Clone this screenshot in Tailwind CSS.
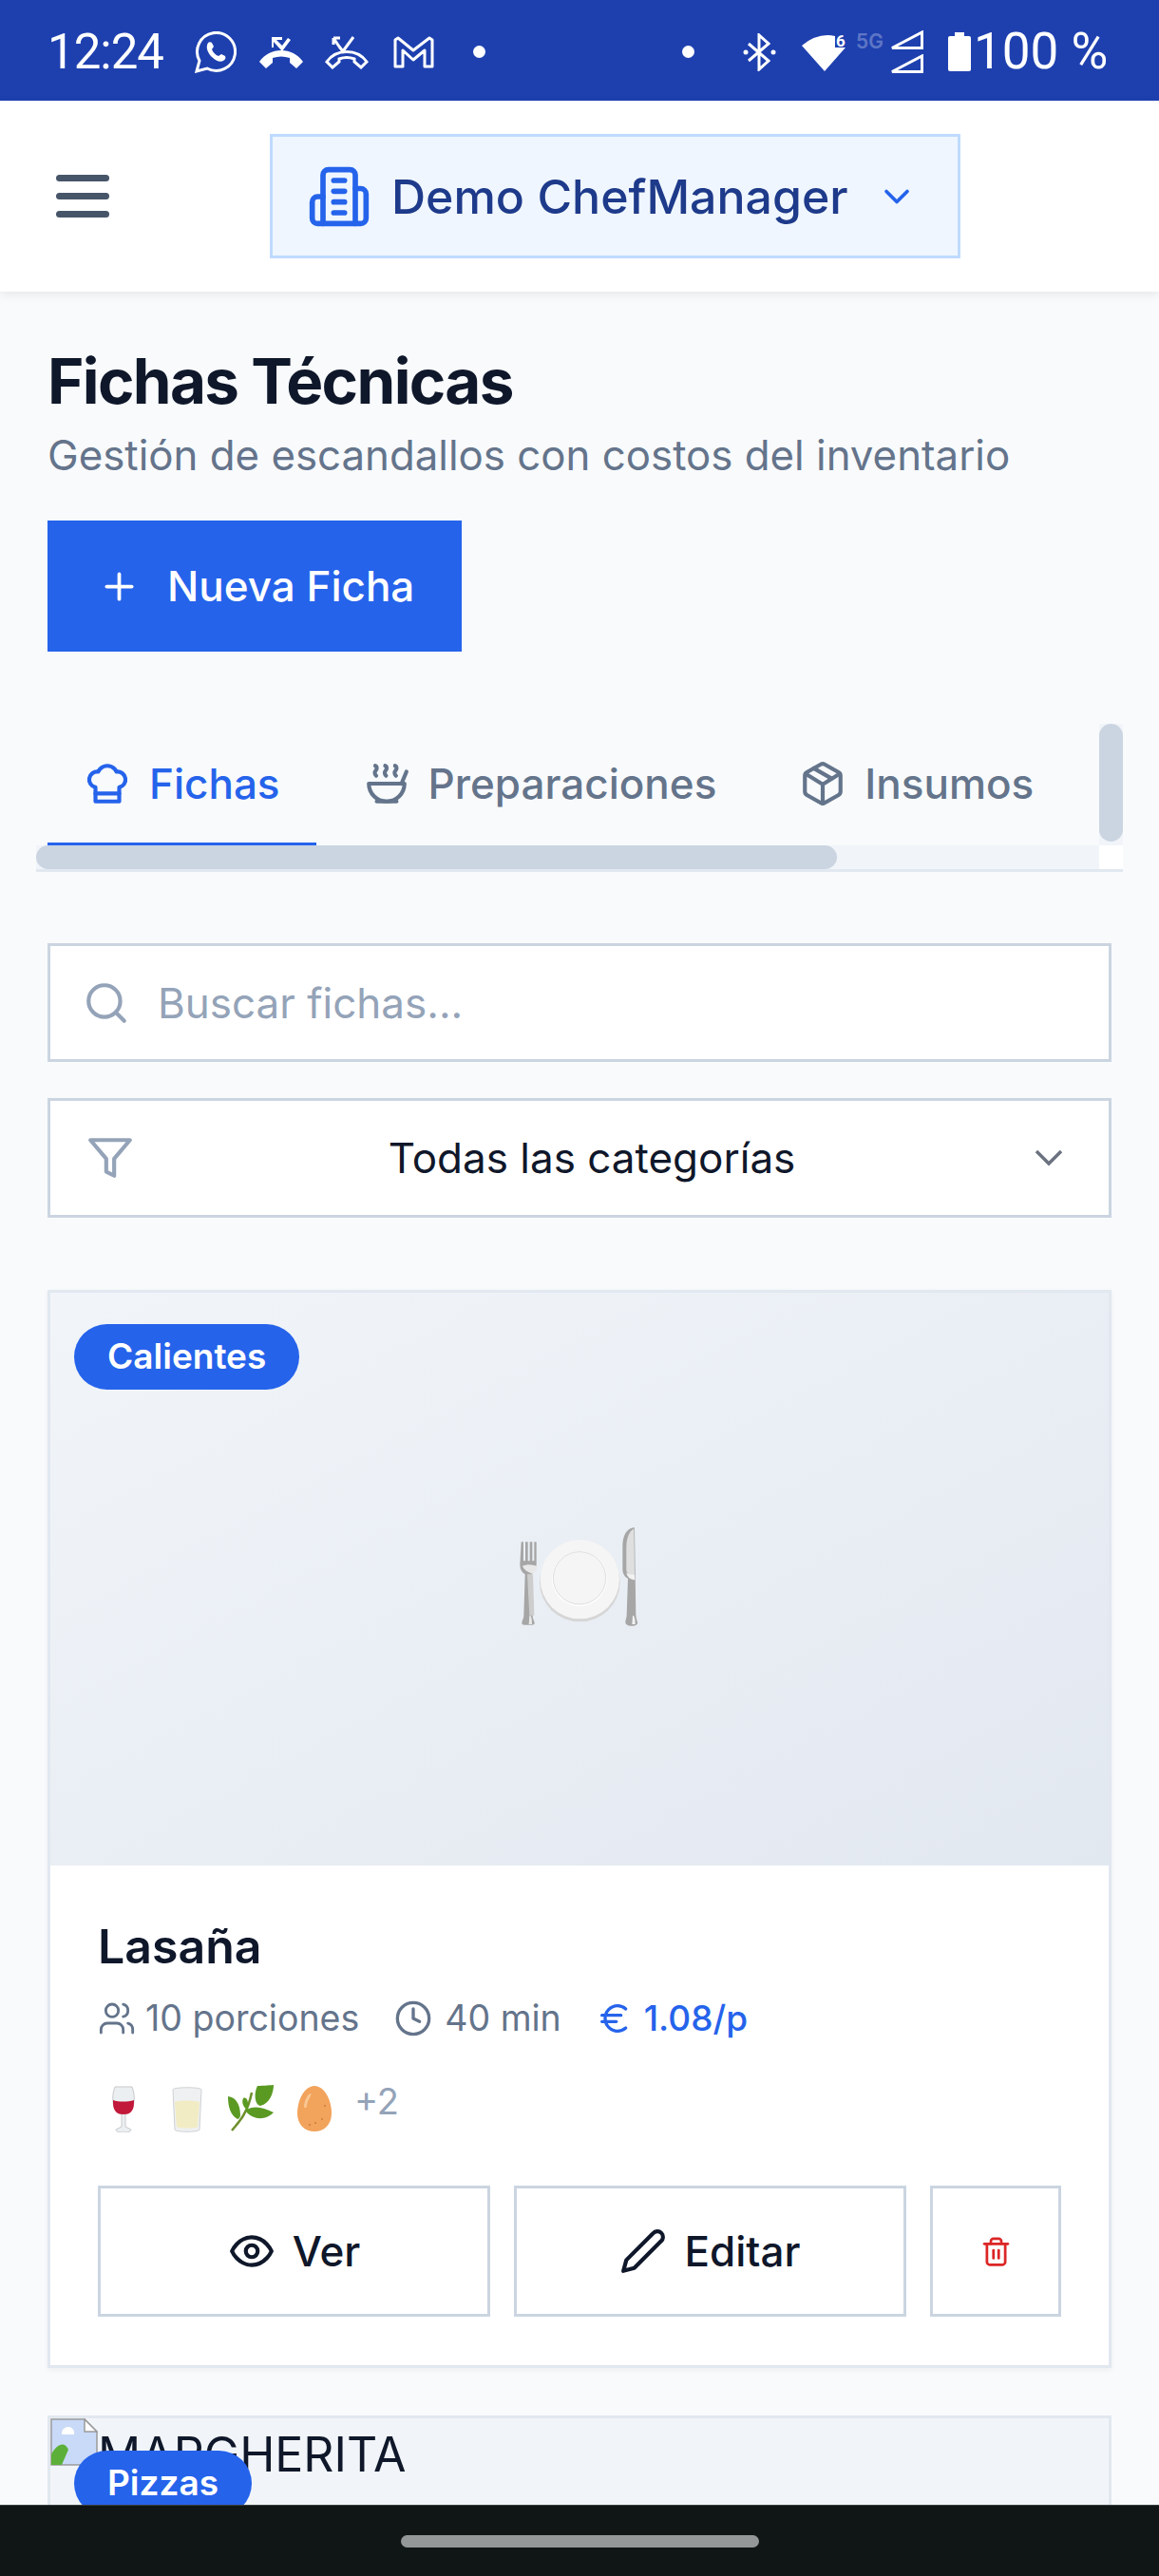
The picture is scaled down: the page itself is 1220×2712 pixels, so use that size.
<!DOCTYPE html>
<html lang="es">
  <head>
    <meta charset="UTF-8" />
    <title>Fichas Técnicas</title>
    <script src="https://cdn.jsdelivr.net/npm/@tailwindcss/browser@4"></script>
  </head>
  <body class="bg-[#f8fafc] font-['Inter',sans-serif] text-[#0f172a]">
    <div class="relative h-[2712px] w-[1220px] overflow-hidden">
      <!-- Android status bar -->
      <div class="flex h-[106px] items-center bg-[#1e40af] pl-[50px] pt-[3px] text-white">
        <span class="w-[125px] font-['Roboto',sans-serif] text-[51px] leading-none tracking-[-1px]">12:24</span>
        <svg class="ml-[30px] h-[44px] w-[44px]" viewBox="0 0 44 44" fill="none" stroke="white" stroke-width="3">
          <path d="M2 42l3-11A20 20 0 1 1 13 39z" />
          <path fill="white" stroke="none" d="M14 12c1-1 3-1 4 0l2 4-2 3c1 3 4 6 7 7l3-2 4 2c1 2 0 4-2 5-3 2-8 0-12-4s-7-10-4-15z" />
        </svg>
        <svg class="ml-[23px] h-[36px] w-[48px]" viewBox="0 0 48 36" fill="white">
          <path d="M1 28C12 12 36 12 47 28l-7 7-7-6v-5c-6-2-12-2-18 0v5l-7 6z" />
          <path d="M14 2h11v3h-6l6 6 6-8 3 2-9 12-9-10v6h-2z" />
        </svg>
        <svg class="ml-[22px] h-[36px] w-[46px]" viewBox="0 0 46 36" fill="none" stroke="white" stroke-width="3">
          <path d="M2 28C12 14 34 14 44 28l-6 6-7-6v-3c-5-2-11-2-16 0v3l-7 6z" />
          <path stroke-width="3" d="M15 12 9 3m0 0v7m0-7h7M15 12l4 5 11-15" />
        </svg>
        <svg class="ml-[26px] h-[34px] w-[43px]" viewBox="0 0 43 34" fill="none" stroke="white" stroke-width="3" stroke-linejoin="round">
          <path d="M2 4l3-2 16 13L38 2l3 2v28h-8V15L21 25 10 15v17H2z" />
        </svg>
        <span class="ml-[41px] h-[13px] w-[13px] rounded-full bg-white"></span>
        <span class="ml-[207px] h-[13px] w-[13px] rounded-full bg-white"></span>
        <svg class="ml-[51px] h-[40px] w-[35px]" viewBox="0 0 35 40" fill="none" stroke="white" stroke-width="3">
          <path d="M6 11l21 18-10 9V2l10 9L6 29" />
          <circle cx="3" cy="20" r="2.5" fill="white" stroke="none" />
          <circle cx="32" cy="20" r="2.5" fill="white" stroke="none" />
        </svg>
        <svg class="ml-[27px] h-[42px] w-[46px]" viewBox="0 0 46 42" fill="white">
          <path d="M0 14Q17 0 35 4V16H46L24 41Z" />
          <text x="36" y="15" font-family="Roboto, sans-serif" font-size="17" font-weight="700" fill="white">6</text>
        </svg>
        <span class="ml-[11px] w-[30px] self-start pt-[29px] text-[21px] font-semibold leading-[24px] text-white/30">5G</span>
        <div class="ml-[4px] flex flex-col gap-[5px]">
          <svg class="h-[20px] w-[37px]" viewBox="0 0 37 20" fill="none" stroke="white" stroke-width="3"><path d="M4 18.500 35.500 2v16.500z" /></svg>
          <svg class="h-[20px] w-[37px]" viewBox="0 0 37 20" fill="none" stroke="white" stroke-width="3"><path d="M4 18.500 35.500 2v16.500z" /></svg>
        </div>
        <svg class="ml-[26px] h-[41px] w-[24px]" viewBox="0 0 24 41" fill="white"><path d="M7 0h10v4h5a2 2 0 0 1 2 2v33a2 2 0 0 1-2 2H2a2 2 0 0 1-2-2V6a2 2 0 0 1 2-2h5z" /></svg>
        <span class="ml-[3px] font-['Roboto',sans-serif] text-[53px] leading-none">100 %</span>
      </div>

      <!-- App header -->
      <header class="relative flex h-[201px] items-center bg-white pl-[59px] shadow-[0_3px_10px_rgba(0,0,0,0.08)]">
        <button class="flex w-[56px] flex-col gap-[12px]">
          <span class="h-[7px] w-[56px] rounded-full bg-[#475569]"></span>
          <span class="h-[7px] w-[56px] rounded-full bg-[#475569]"></span>
          <span class="h-[7px] w-[56px] rounded-full bg-[#475569]"></span>
        </button>
        <div class="ml-[169px] flex h-[131px] w-[727px] items-center border-[3px] border-[#bfdbfe] bg-[#eff6ff] pl-[36px]">
          <svg class="h-[68px] w-[68px]" viewBox="0 0 24 24" fill="none" stroke="#2563eb" stroke-width="2" stroke-linecap="round" stroke-linejoin="round">
            <path d="M6 22V4a2 2 0 0 1 2-2h8a2 2 0 0 1 2 2v18Z" />
            <path d="M6 12H4a2 2 0 0 0-2 2v6a2 2 0 0 0 2 2h2" />
            <path d="M18 9h2a2 2 0 0 1 2 2v9a2 2 0 0 1-2 2h-2" />
            <path d="M10 6h4" /><path d="M10 10h4" /><path d="M10 14h4" /><path d="M10 18h4" />
          </svg>
          <span class="ml-[21px] text-[50px] font-medium leading-none text-[#1e3a8a]">Demo ChefManager</span>
          <svg class="ml-[29px] h-[44px] w-[44px]" viewBox="0 0 24 24" fill="none" stroke="#2563eb" stroke-width="2" stroke-linecap="round" stroke-linejoin="round"><path d="m6 9 6 6 6-6" /></svg>
        </div>
      </header>

      <main class="px-[50px]">
        <h1 class="mt-[50px] text-[65.5px] font-bold leading-[90px] tracking-[-0.025em] text-[#0f172a]">Fichas Técnicas</h1>
        <p class="mt-[3px] text-[43.8px] leading-[60px] text-[#64748b]">Gestión de escandallos con costos del inventario</p>
        <button class="mt-[38px] flex h-[138px] w-[436px] items-center bg-[#2563eb] pl-[53px] text-[44px] font-medium text-white">
          <svg class="h-[45px] w-[45px]" viewBox="0 0 24 24" fill="none" stroke="white" stroke-width="2" stroke-linecap="round"><path d="M5 12h14" /><path d="M12 5v14" /></svg>
          <span class="ml-[28px]">Nueva Ficha</span>
        </button>

        <!-- Tabs with their scrollbars -->
        <div class="-ml-[12px] mt-[76px] w-[1144px] border-b-[3px] border-[#e2e8f0]">
          <div class="grid grid-cols-[1119px_25px] grid-rows-[128px_25px]">
            <div class="flex gap-[11px] overflow-hidden pl-[12px]">
              <div class="flex h-[128px] items-center gap-[19px] border-b-[3px] border-[#2563eb] px-[38px] text-[44px] font-medium text-[#2563eb]">
                <svg class="h-[50px] w-[50px]" viewBox="0 0 24 24" fill="none" stroke="currentColor" stroke-width="2" stroke-linecap="round" stroke-linejoin="round">
                  <path d="M6 13.870A4 4 0 0 1 7.410 6a5.110 5.110 0 0 1 1.050-1.540 5 5 0 0 1 7.080 0A5.110 5.110 0 0 1 16.590 6 4 4 0 0 1 18 13.870V21H6Z" /><path d="M6 17h12" />
                </svg>
                <span>Fichas</span>
              </div>
              <div class="flex h-[128px] items-center gap-[19px] border-b-[3px] border-transparent px-[38px] text-[44px] font-medium text-[#64748b]">
                <svg class="h-[50px] w-[50px]" viewBox="0 0 24 24" fill="none" stroke="currentColor" stroke-width="2" stroke-linecap="round" stroke-linejoin="round">
                  <path d="M12 21a9 9 0 0 0 9-9H3a9 9 0 0 0 9 9Z" /><path d="M7 21h10" /><path d="M19.500 12 22 6" />
                  <path d="M16.250 3c.27.1.8.53.75 1.360-.06.83-.93 1.200-1 2.020-.05.78.34 1.240.73 1.620" />
                  <path d="M11.250 3c.27.1.8.53.74 1.360-.05.83-.93 1.200-.98 2.020-.06.78.33 1.240.72 1.620" />
                  <path d="M6.250 3c.27.1.8.53.75 1.360-.06.83-.93 1.200-1 2.020-.05.78.34 1.240.74 1.620" />
                </svg>
                <span>Preparaciones</span>
              </div>
              <div class="flex h-[128px] items-center gap-[19px] border-b-[3px] border-transparent px-[38px] text-[44px] font-medium text-[#64748b]">
                <svg class="h-[50px] w-[50px]" viewBox="0 0 24 24" fill="none" stroke="currentColor" stroke-width="2" stroke-linecap="round" stroke-linejoin="round">
                  <path d="M11 21.730a2 2 0 0 0 2 0l7-4A2 2 0 0 0 21 16V8a2 2 0 0 0-1-1.730l-7-4a2 2 0 0 0-2 0l-7 4A2 2 0 0 0 3 8v8a2 2 0 0 0 1 1.730z" />
                  <path d="M12 22V12" /><path d="m3.300 7 7.703 4.734a2 2 0 0 0 1.994 0L20.700 7" /><path d="m7.500 4.270 9 5.150" />
                </svg>
                <span>Insumos</span>
              </div>
            </div>
            <div class="bg-[#f1f5f9]"><div class="h-[124px] w-[25px] rounded-full bg-[#cbd5e1]"></div></div>
            <div class="bg-[#f1f5f9]"><div class="h-[25px] w-[843px] rounded-full bg-[#cbd5e1]"></div></div>
            <div class="bg-white"></div>
          </div>
        </div>

        <!-- Search and filter -->
        <div class="mt-[75px] flex h-[125px] items-center border-[3px] border-[#cbd5e1] bg-white pl-[34px]">
          <svg class="h-[50px] w-[50px] shrink-0" viewBox="0 0 24 24" fill="none" stroke="#94a3b8" stroke-width="2" stroke-linecap="round" stroke-linejoin="round"><circle cx="11" cy="11" r="8" /><path d="m21 21-4.300-4.300" /></svg>
          <span class="ml-[29px] text-[44px] text-[#94a3b8]">Buscar fichas...</span>
        </div>
        <div class="mt-[38px] flex h-[126px] items-center justify-between border-[3px] border-[#cbd5e1] bg-white pl-[38px] pr-[48px]">
          <svg class="h-[50px] w-[50px] shrink-0" viewBox="0 0 24 24" fill="none" stroke="#94a3b8" stroke-width="2" stroke-linecap="round" stroke-linejoin="round"><polygon points="22 3 2 3 10 12.460 10 19 14 21 14 12.460 22 3" /></svg>
          <span class="ml-[16px] text-[44px] text-[#0f172a]">Todas las categorías</span>
          <svg class="h-[18px] w-[30px] shrink-0" viewBox="0 0 30 18" fill="none" stroke="#6b7280" stroke-width="3.500"><path d="M2 2l13 13L28 2" /></svg>
        </div>

        <!-- First recipe card -->
        <article class="mt-[76px] border-[3px] border-[#e2e8f0] bg-white shadow-[0_2px_6px_rgba(0,0,0,0.05)]">
          <div class="relative flex h-[603px] items-center justify-center bg-gradient-to-br from-[#f1f5f9] to-[#e2e8f0]">
            <span class="absolute left-[25px] top-[33px] rounded-full bg-[#2563eb] px-[35px] pb-[10px] pt-[8px] text-[37px] font-semibold leading-[51px] text-white">Calientes</span>
            <svg class="mb-[6px] h-[170px] w-[220px]" viewBox="0 15 660 510">
              <ellipse cx="331" cy="287" rx="127" ry="125" fill="#d6d6d6" />
              <circle cx="331" cy="278" r="125" fill="#f5f5f5" />
              <circle cx="330" cy="276" r="87" fill="#fff" />
              <circle cx="330" cy="274" r="83" fill="#f5f5f5" stroke="#dedede" stroke-width="3" />
              <path fill="#a6a6a6" d="M146 160h7v60h6v-60h8v60h6v-60h8v60h6v-60h7v70c0 16-6 26-16 32l4 130c0 12 6 18 6 24 0 6-6 6-20 6s-20 0-20-6c0-8 6-14 6-24l4-130c-10-6-16-16-16-32l4-70z" />
              <path fill="#cdcdcd" d="M165 262h18l4 130h-15z" />
              <path fill="#e8e8e8" d="M150 236c12-6 30-6 46 0 0 10-4 18-14 24-14-4-26-10-32-24zM172 392c6 0 8 10 8 28h-10z" />
              <path fill="#a6a6a6" d="M500 115c-22 4-34 26-34 60v70c0 16 8 26 17 30l-4 116c0 10-4 16-4 22s6 12 20 12 20-6 18-12c-2-6-4-12-5-22l-4-276z" />
              <path fill="#dfdfdf" d="M502 118c-16 10-24 30-24 60v70c0 12 14 18 26 20z" />
              <path fill="#f2f2f2" d="M478 258c8 4 18 6 26 6l1 16c-12 0-24-8-27-22zM498 392c6 0 8 14 8 28h-10z" />
            </svg>
          </div>
          <div class="px-[50px] pb-[51px] pt-[50px]">
            <h3 class="text-[50px] font-semibold leading-[70px] text-[#0f172a]">Lasaña</h3>
            <div class="mt-[13px] flex h-[56px] items-center text-[37.5px] text-[#64748b]">
              <svg class="h-[40px] w-[40px]" viewBox="0 0 24 24" fill="none" stroke="currentColor" stroke-width="1.700" stroke-linecap="round" stroke-linejoin="round">
                <path d="M16 21v-2a4 4 0 0 0-4-4H6a4 4 0 0 0-4 4v2" /><circle cx="9" cy="7" r="4" /><path d="M22 21v-2a4 4 0 0 0-3-3.870" /><path d="M16 3.130a4 4 0 0 1 0 7.750" />
              </svg>
              <span class="ml-[10px]">10 porciones</span>
              <svg class="ml-[37px] h-[40px] w-[40px]" viewBox="0 0 24 24" fill="none" stroke="currentColor" stroke-width="2" stroke-linecap="round" stroke-linejoin="round"><circle cx="12" cy="12" r="10" /><path d="M12 6v6l4 2" /></svg>
              <span class="ml-[13px]">40 min</span>
              <svg class="ml-[36px] h-[40px] w-[40px]" viewBox="0 0 24 24" fill="none" stroke="#2563eb" stroke-width="2" stroke-linecap="round" stroke-linejoin="round">
                <path d="M4 10h12" /><path d="M4 14h9" /><path d="M19 6a7.700 7.700 0 0 0-5.200-2A7.900 7.900 0 0 0 6 12c0 4.400 3.500 8 7.800 8 2 0 3.800-.8 5.200-2" />
              </svg>
              <span class="ml-[11px] text-[37px] font-medium text-[#2563eb]">1.08/p</span>
            </div>
            <div class="mt-[42px] flex h-[50px] items-start gap-[17px] pl-[2px]">
              <svg class="h-[50px] w-[50px]" viewBox="0 0 50 50">
                <path fill="#eceff1" stroke="#c7c9cb" d="M16 2h18c3 8 3 17 0 23-2 4-5 5-7 6v13l6 3c0 2-3 3-8 3s-8-1-8-3l6-3V31c-2-1-5-2-7-6-3-6-3-15 0-23z" />
                <path fill="#c2183a" d="M14 16c6 2 15 2 22 0 0 5 0 8-2 11-2 3-5 4-9 4s-7-1-9-4c-2-3-2-6-2-11z" />
              </svg>
              <svg class="h-[50px] w-[50px]" viewBox="0 0 50 50">
                <path fill="#eef0f1" stroke="#cfd2d4" d="M10 5c0-3 30-3 30 0l-2 42c0 3-26 3-26 0z" />
                <path fill="#f2ecc4" d="M12 18c5-2 21-2 26 0l-2 26c-3 2-19 2-22 0z" />
              </svg>
              <svg class="h-[50px] w-[50px]" viewBox="0 0 50 50">
                <path fill="none" stroke="#6d8f2c" stroke-width="2.500" d="M5 48C14 38 22 28 26 8" />
                <path fill="#5a9a22" d="M32 1c6 0 16-1 17-1 0 8-4 20-14 22-6-1-7-13-3-21zM1 12c8 1 13 8 13 20 0 2-2 4-3 4C4 32 1 24 1 12zM19 27c9-6 18-4 30 2-7 7-20 10-30-2zM17 14c4-2 6 4 5 12-5-2-7-8-5-12z" />
              </svg>
              <svg class="h-[50px] w-[50px]" viewBox="0 0 50 50">
                <path fill="#f2a35c" d="M25 1c10 0 18 14 18 29 0 12-8 19-18 19S7 42 7 30C7 15 15 1 25 1z" />
                <path fill="#f9c792" d="M14 22c1-8 5-13 7-13 2 1-3 6-4 13 0 3-3 3-3 0z" />
                <circle cx="20" cy="42" r="1" fill="#c77e3e" /><circle cx="26" cy="40" r="1" fill="#c77e3e" /><circle cx="33" cy="36" r="1" fill="#c77e3e" /><circle cx="36" cy="22" r="1" fill="#c77e3e" />
              </svg>
              <span class="-mt-[8px] text-[38px] leading-[50px] text-[#94a3b8]">+2</span>
            </div>
            <div class="mt-[56px] flex gap-[25px]">
              <button class="flex h-[138px] flex-1 items-center justify-center gap-[18px] border-[3px] border-[#cbd5e1] bg-white text-[44px] font-medium text-[#0f172a]">
                <svg class="h-[50px] w-[50px]" viewBox="0 0 24 24" fill="none" stroke="currentColor" stroke-width="2" stroke-linecap="round" stroke-linejoin="round"><path d="M2 12s3-7 10-7 10 7 10 7-3 7-10 7-10-7-10-7Z" /><circle cx="12" cy="12" r="3" /></svg>
                Ver
              </button>
              <button class="flex h-[138px] flex-1 items-center justify-center gap-[18px] border-[3px] border-[#cbd5e1] bg-white text-[44px] font-medium text-[#0f172a]">
                <svg class="h-[50px] w-[50px]" viewBox="0 0 24 24" fill="none" stroke="currentColor" stroke-width="2" stroke-linecap="round" stroke-linejoin="round"><path d="M17 3a2.850 2.830 0 1 1 4 4L7.500 20.500 2 22l1.500-5.500Z" /></svg>
                Editar
              </button>
              <button class="flex h-[138px] w-[138px] items-center justify-center border-[3px] border-[#cbd5e1] bg-white">
                <svg class="h-[33px] w-[33px]" viewBox="0 0 24 24" fill="none" stroke="#dc2626" stroke-width="2" stroke-linecap="round" stroke-linejoin="round">
                  <path d="M3 6h18" /><path d="M19 6v14c0 1-1 2-2 2H7c-1 0-2-1-2-2V6" /><path d="M8 6V4c0-1 1-2 2-2h4c1 0 2 1 2 2v2" /><path d="M10 11v6" /><path d="M14 11v6" />
                </svg>
              </button>
            </div>
          </div>
        </article>

        <!-- Second card, image failed to load -->
        <article class="mt-[50px] border-[3px] border-[#e2e8f0] bg-white">
          <div class="relative flex h-[603px] items-start bg-[#f1f5f9]">
            <svg class="h-[50px] w-[50px] shrink-0" viewBox="0 0 50 50">
              <path fill="#c9daf8" stroke="#9a9a9a" stroke-width="1.500" d="M1 1h35l13 13v35H1z" />
              <path fill="#fff" stroke="#9a9a9a" stroke-width="1.500" d="M36 1v13h13z" />
              <path fill="#fff" d="M12 16c0-5 4-7 7-7s7 3 6 8H12z" />
              <path fill="#5cb03a" d="M1 49V38c4-8 10-12 14-10 2 1 3 3 4 5l-7 16z" />
            </svg>
            <span class="mt-[8px] text-[50px] leading-[60px] text-[#0f172a]">MARGHERITA</span>
            <span class="absolute left-[25px] top-[34px] rounded-full bg-[#2563eb] px-[35px] pb-[10px] pt-[8px] text-[37px] font-semibold leading-[51px] text-white">Pizzas</span>
          </div>
        </article>
      </main>

      <!-- Android navigation bar, over the page -->
      <div class="absolute inset-x-0 bottom-0 flex h-[75px] items-center justify-center border-t border-[#3a3f3f] bg-[#101616]">
        <span class="h-[13px] w-[377px] rounded-full bg-[#949797]"></span>
      </div>
    </div>
  </body>
</html>
